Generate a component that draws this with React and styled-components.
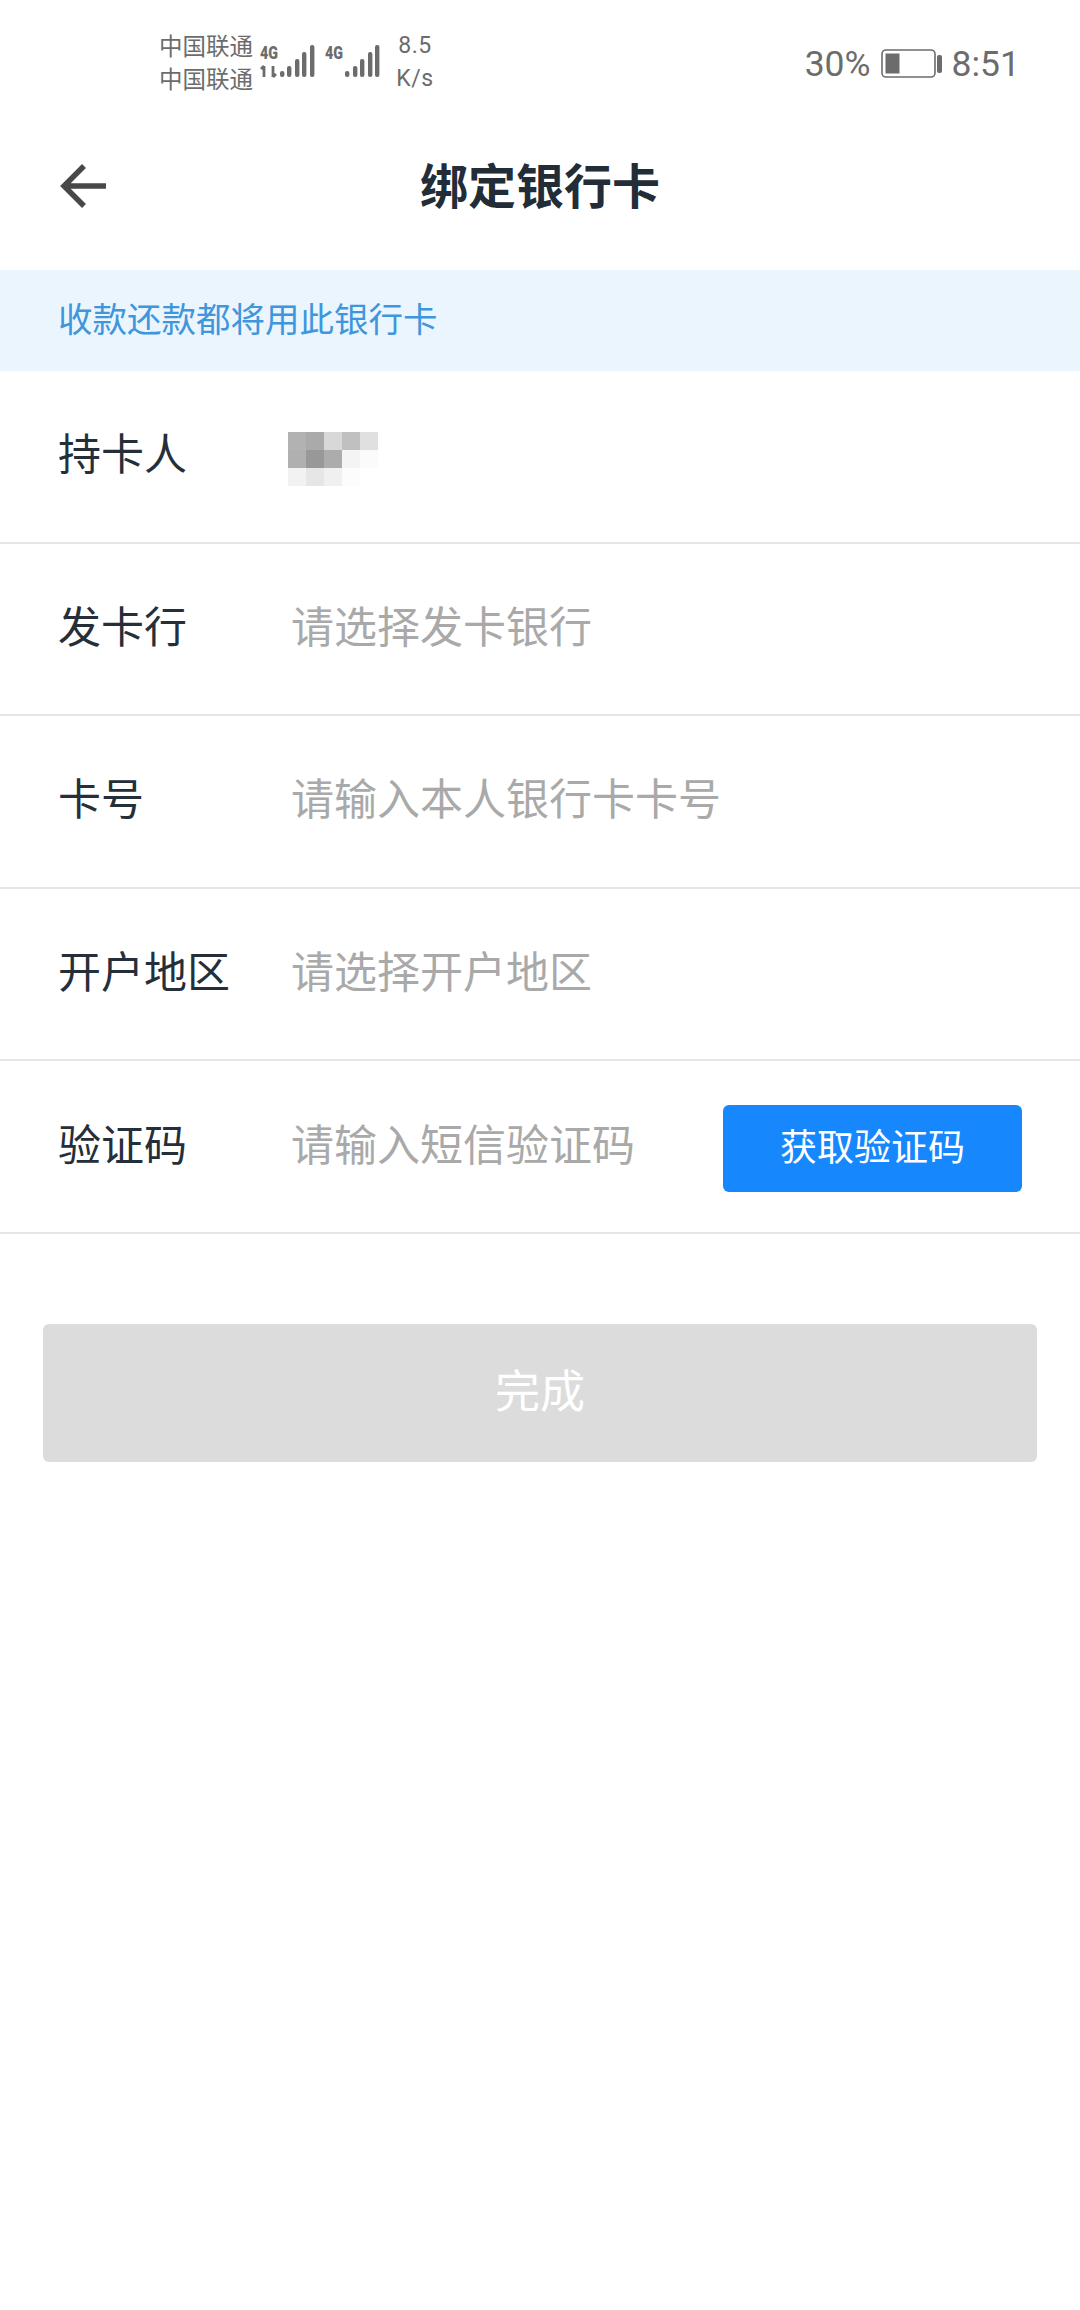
import React from 'react'
import styled, { createGlobalStyle } from 'styled-components'

const GlobalStyle = createGlobalStyle`
  html, body {
    margin: 0;
    padding: 0;
    background: #fff;
    font-family: "Noto Sans CJK SC", "Noto Sans", sans-serif;
  }
`;

const Page = styled.div`
  width: 1080px;
  height: 2310px;
  background: #fff;
  overflow: hidden;
`;

const StatusBar = styled.div`
  height: 104px;
  padding: 20px 60px 0 159px;
  box-sizing: border-box;
  display: flex;
  align-items: center;
  color: #6c6c6c;
`;

const Carriers = styled.div`
  width: 101px;
  font-size: 23.5px;
  line-height: 33px;
  white-space: nowrap;
`;

const SignalIcon = styled.svg`
  width: 122px;
  height: 40px;
  flex-shrink: 0;
`;

const Speed = styled.div`
  width: 50px;
  margin-left: 8px;
  text-align: center;
  font-family: Roboto, sans-serif;
  font-size: 23px;
  line-height: 33px;
  letter-spacing: 0.6px;
`;

const StatusRight = styled.div`
  margin-left: auto;
  padding-top: 3px;
  display: flex;
  align-items: center;
  gap: 10px;
  font-family: Roboto, sans-serif;
  font-size: 35.5px;
`;

const BatteryIcon = styled.svg`
  width: 61px;
  height: 30px;
`;

const Header = styled.div`
  height: 166px;
  padding-bottom: 8px;
  box-sizing: border-box;
  position: relative;
  display: flex;
  align-items: center;
  justify-content: center;
`;

const BackIcon = styled.svg`
  position: absolute;
  left: 59px;
  top: 58px;
  width: 48px;
  height: 48px;
`;

const Title = styled.h1`
  margin: 0;
  font-size: 48px;
  font-weight: 700;
  color: #222d38;
`;

const Banner = styled.div`
  height: 101px;
  padding: 0 0 8px 58px;
  box-sizing: border-box;
  display: flex;
  align-items: center;
  background: #ebf5fe;
  color: #3f96dc;
  font-size: 34.5px;
`;

const Row = styled.div`
  height: 172.6px;
  padding: 0 58px;
  box-sizing: border-box;
  display: flex;
  align-items: center;
  border-bottom: 2px solid #e6e6e6;
  font-size: 43px;
`;

const Label = styled.div`
  width: 233px;
  padding-bottom: 10px;
  flex-shrink: 0;
  color: #252f3a;
`;

const Placeholder = styled.div`
  flex: 1;
  padding-bottom: 10px;
  color: #a9a9a9;
  white-space: nowrap;
`;

const PixelGrid = styled.div`
  display: grid;
  grid-template-columns: repeat(5, 18px);
  grid-auto-rows: 18px;
  margin-left: -3px;
  margin-top: 6px;
`;

const Pixel = styled.div`
  background: ${props => props.shade};
`;

const CodeButton = styled.button`
  width: 299px;
  height: 87px;
  margin-top: 3px;
  border: 0;
  padding: 0 0 6px;
  border-radius: 6px;
  background: #1787fe;
  color: #fff;
  font-family: inherit;
  font-size: 37px;
`;

const SubmitButton = styled.button`
  display: block;
  width: 994px;
  height: 138px;
  margin: 90px 0 0 43px;
  border: 0;
  padding: 0 0 8px;
  border-radius: 6px;
  background: #dcdcdc;
  color: #fff;
  font-family: inherit;
  font-size: 45px;
`;

const pixels = [
  '#b2b2b2', '#aaaaaa', '#d8d8d8', '#c0c0c0', '#e0e0e0',
  '#b0b0b0', '#989898', '#acacac', '#f4f4f4', '#fbfbfb',
  '#f2f2f2', '#e6e6e6', '#f0f0f0', '#fcfcfc', '#ffffff',
];

const bars = (xs) => {
  const tops = [3, 10, 17, 24, 29];
  return xs.map((x, i) => (
    <rect key={x} x={x} y={tops[4 - i]} width="4.4" height={35 - tops[4 - i]} rx="2" fill="#6c6c6c" />
  ));
};

const Signal = () => (
  <SignalIcon viewBox="0 0 122 40">
    <text x="0" y="17" fontFamily="Roboto, sans-serif" fontWeight="900" fontSize="19" fill="#6c6c6c" textLength="18" lengthAdjust="spacingAndGlyphs">4G</text>
    <text x="65" y="17" fontFamily="Roboto, sans-serif" fontWeight="900" fontSize="19" fill="#6c6c6c" textLength="18" lengthAdjust="spacingAndGlyphs">4G</text>
    <path d="M4 24v11M1 27l3-3M13 24v11M13 35l3-3" stroke="#6c6c6c" strokeWidth="2.8" fill="none" />
    {bars([20, 27, 35, 42, 50])}
    {bars([85, 93, 100, 108, 115])}
  </SignalIcon>
);

const Battery = () => (
  <BatteryIcon viewBox="0 0 61 30">
    <rect x="1" y="1" width="53" height="27" rx="4" fill="none" stroke="#6c6c6c" strokeWidth="1.6" />
    <rect x="4.5" y="4.5" width="14" height="20" fill="#6c6c6c" />
    <rect x="56" y="6" width="5" height="18" rx="2" fill="#6c6c6c" />
  </BatteryIcon>
);

const rows = [
  { label: '发卡行', placeholder: '请选择发卡银行' },
  { label: '卡号', placeholder: '请输入本人银行卡卡号' },
  { label: '开户地区', placeholder: '请选择开户地区' },
];

const App = () => {
  return (
    <Page>
      <GlobalStyle />
      <StatusBar>
        <Carriers>
          <div>中国联通</div>
          <div>中国联通</div>
        </Carriers>
        <Signal />
        <Speed>
          <div>8.5</div>
          <div>K/s</div>
        </Speed>
        <StatusRight>
          <span>30%</span>
          <Battery />
          <span>8:51</span>
        </StatusRight>
      </StatusBar>
      <Header>
        <BackIcon viewBox="0 0 48 48">
          <path d="M25 4L5 24l20 20M5 24h42" fill="none" stroke="#484848" strokeWidth="5.5" />
        </BackIcon>
        <Title>绑定银行卡</Title>
      </Header>
      <Banner>收款还款都将用此银行卡</Banner>
      <Row>
        <Label>持卡人</Label>
        <PixelGrid>
          {pixels.map((shade, i) => (
            <Pixel key={i} shade={shade} />
          ))}
        </PixelGrid>
      </Row>
      {rows.map((row) => (
        <Row key={row.label}>
          <Label>{row.label}</Label>
          <Placeholder>{row.placeholder}</Placeholder>
        </Row>
      ))}
      <Row>
        <Label>验证码</Label>
        <Placeholder>请输入短信验证码</Placeholder>
        <CodeButton>获取验证码</CodeButton>
      </Row>
      <SubmitButton>完成</SubmitButton>
    </Page>
  )
}

export default App;
